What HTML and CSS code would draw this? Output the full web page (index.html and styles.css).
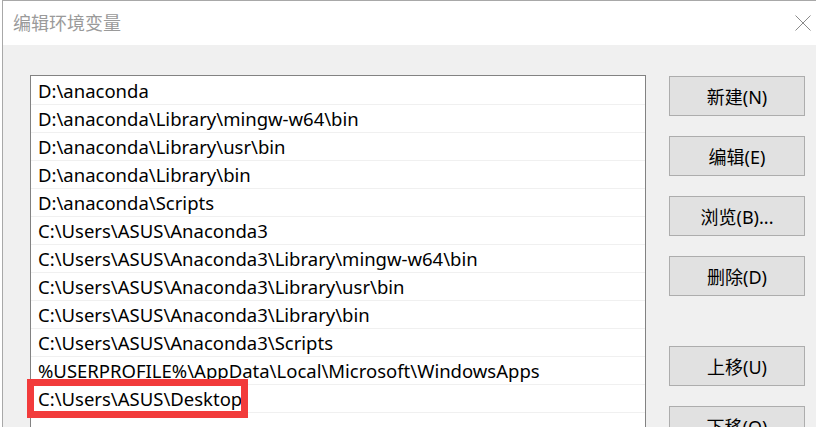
FILE: index.html
```html
<!DOCTYPE html>
<html lang="zh-CN">
<head>
<meta charset="utf-8">
<title>编辑环境变量</title>
<link rel="stylesheet" href="styles.css">
</head>
<body>
<div class="dialog">
  <div class="titlebar">
    <span class="title">编辑环境变量</span>
    <svg class="close" width="16" height="16" viewBox="0 0 16 16"><path d="M0.5 0.5 L15.5 15.5 M15.5 0.5 L0.5 15.5" stroke="#8a8a8a" stroke-width="1" fill="none"/></svg>
  </div>
  <div class="content">
    <div class="list">
      <div class="row">D:\anaconda</div>
      <div class="row">D:\anaconda\Library\mingw-w64\bin</div>
      <div class="row">D:\anaconda\Library\usr\bin</div>
      <div class="row">D:\anaconda\Library\bin</div>
      <div class="row">D:\anaconda\Scripts</div>
      <div class="row">C:\Users\ASUS\Anaconda3</div>
      <div class="row">C:\Users\ASUS\Anaconda3\Library\mingw-w64\bin</div>
      <div class="row">C:\Users\ASUS\Anaconda3\Library\usr\bin</div>
      <div class="row">C:\Users\ASUS\Anaconda3\Library\bin</div>
      <div class="row">C:\Users\ASUS\Anaconda3\Scripts</div>
      <div class="row">%USERPROFILE%\AppData\Local\Microsoft\WindowsApps</div>
      <div class="row">C:\Users\ASUS\Desktop</div>
      <div class="row"></div>
    </div>
    <div class="buttons">
      <button class="btn">新建(N)</button>
      <button class="btn">编辑(E)</button>
      <button class="btn">浏览(B)...</button>
      <button class="btn">删除(D)</button>
      <button class="btn btn-gap">上移(U)</button>
      <button class="btn">下移(O)</button>
    </div>
  </div>
</div>
<div class="highlight"></div>
</body>
</html>
```
FILE: styles.css
```css
html, body {
  margin: 0;
  padding: 0;
  height: 100%;
  overflow: hidden;
  background: #ffffff;
}
body {
  position: relative;
  font-family: "Noto Sans", "Noto Sans CJK SC", sans-serif;
}
.dialog {
  margin-left: 2px;
  height: 100%;
  border-top: 1px solid #a8a8a8;
  border-left: 1px solid #a8a8a8;
  box-sizing: border-box;
  display: flex;
  flex-direction: column;
}
.titlebar {
  height: 44px;
  flex: none;
  background: #ffffff;
  display: flex;
  align-items: center;
  justify-content: space-between;
  padding: 0 5px 0 10px;
}
.title {
  font-family: "Noto Sans CJK SC", sans-serif;
  font-size: 18px;
  color: #9a9a9a;
  margin-top: -2px;
}
.close {
  margin-top: -1px;
}
.content {
  flex: 1;
  background: #f0f0f0;
  display: flex;
  align-items: flex-start;
  gap: 23px;
  padding: 30px 0 0 27px;
}
.list {
  width: 616px;
  box-sizing: border-box;
  border: 1px solid #828282;
  background: #ffffff;
  padding-top: 1px;
  height: 420px;
}
.row {
  height: 27px;
  border-bottom: 1px solid #f0f0f0;
  padding-left: 7px;
  font-size: 18.5px;
  line-height: 27px;
  color: #000;
  white-space: nowrap;
}
.buttons {
  display: flex;
  flex-direction: column;
  gap: 20px;
  padding-top: 1px;
}
.btn {
  width: 136px;
  height: 40px;
  box-sizing: border-box;
  background: #e1e1e1;
  border: 1px solid #adadad;
  font-family: "Noto Sans", "Noto Sans CJK SC", sans-serif;
  font-size: 18px;
  color: #000;
  padding: 0;
}
.btn-gap {
  margin-top: 30px;
}
.highlight {
  position: absolute;
  left: 27px;
  top: 379px;
  width: 221px;
  height: 39px;
  box-sizing: border-box;
  border: 7px solid #f23b3b;
}
```
